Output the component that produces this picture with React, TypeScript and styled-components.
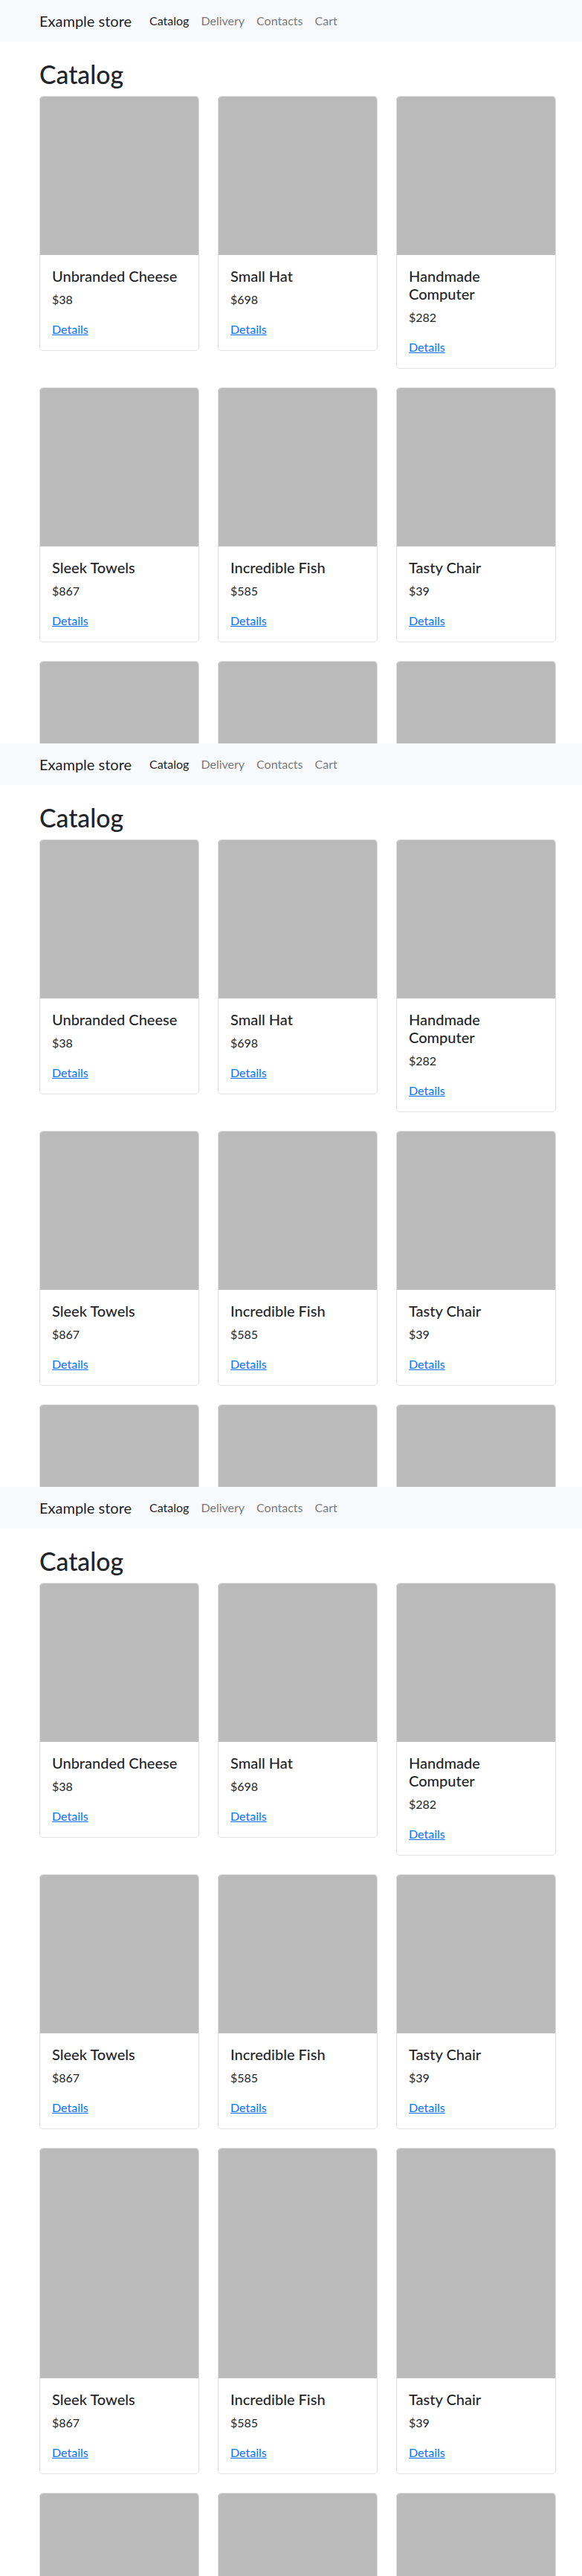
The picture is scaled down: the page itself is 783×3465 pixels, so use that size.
import React from "react";
import styled, { createGlobalStyle } from "styled-components";

const GlobalStyle = createGlobalStyle`
  html, body {
    margin: 0;
    padding: 0;
    background: #ffffff;
  }
  body {
    font-family: Lato, "Open Sans", "Liberation Sans", sans-serif;
    font-size: 16px;
    line-height: 1.5;
    color: #212529;
  }
  * { box-sizing: border-box; }
`;

const Screen = styled.section<{ $h: number }>`
  height: ${(p) => p.$h}px;
  overflow: hidden;
  background: #ffffff;
`;

const Navbar = styled.nav`
  height: 56px;
  background: #f8f9fa;
  padding: 8px 0;
  display: flex;
  align-items: center;
`;

const NavInner = styled.div`
  margin-left: 53px;
  display: flex;
  align-items: center;
`;

const Brand = styled.a`
  font-size: 20px;
  line-height: 30px;
  padding: 5px 0;
  margin-right: 16px;
  color: rgba(0, 0, 0, 0.9);
  text-decoration: none;
  white-space: nowrap;
`;

const NavList = styled.ul`
  list-style: none;
  display: flex;
  margin: 0;
  padding: 0;
`;

const NavLink = styled.a<{ $active?: boolean }>`
  display: block;
  padding: 8px 8px;
  font-size: 16px;
  line-height: 24px;
  text-decoration: none;
  color: ${(p) => (p.$active ? "rgba(0,0,0,0.9)" : "rgba(0,0,0,0.55)")};
`;

const Main = styled.main`
  margin-left: 53px;
  width: 695px;
`;

const Heading = styled.h1`
  margin: 24px 0 8px;
  font-size: 33.75px;
  line-height: 41px;
  font-weight: 500;
  color: #212529;
`;

const Grid = styled.div`
  display: grid;
  grid-template-columns: repeat(3, 215px);
  column-gap: 25px;
  row-gap: 25px;
  align-items: start;
`;

const Card = styled.div`
  display: flex;
  flex-direction: column;
  border: 1px solid rgba(0, 0, 0, 0.125);
  border-radius: 5px;
  background: #ffffff;
  overflow: hidden;
`;

const CardImage = styled.div<{ $h: number }>`
  height: ${(p) => p.$h}px;
  background: #bababa;
`;

const CardBody = styled.div`
  padding: 16px;
`;

const Title = styled.h5`
  margin: 0 0 8px;
  font-size: 20px;
  line-height: 24px;
  font-weight: 500;
  color: #212529;
`;

const Price = styled.p`
  margin: 0 0 16px;
  font-size: 16px;
  line-height: 24px;
`;

const Details = styled.a`
  font-size: 16px;
  line-height: 24px;
  color: #0d6efd;
  text-decoration: underline;
`;

type Product = { name: string; price: number };

const rowA: Product[] = [
  { name: "Unbranded Cheese", price: 38 },
  { name: "Small Hat", price: 698 },
  { name: "Handmade Computer", price: 282 },
];
const rowB: Product[] = [
  { name: "Sleek Towels", price: 867 },
  { name: "Incredible Fish", price: 585 },
  { name: "Tasty Chair", price: 39 },
];

const ProductCard = ({ p, img }: { p: Product; img: number }) => (
  <Card>
    <CardImage $h={img} />
    <CardBody>
      <Title>{p.name}</Title>
      <Price>${p.price}</Price>
      <Details href="#">Details</Details>
    </CardBody>
  </Card>
);

/* A card that lies below the fold of the screen: only its picture shows. */
const PeekCard = () => (
  <Card>
    <CardImage $h={213} />
  </Card>
);

const Page = ({ height, tallRow }: { height: number; tallRow?: number }) => (
  <Screen $h={height}>
    <Navbar>
      <NavInner>
        <Brand href="#">Example store</Brand>
        <NavList>
          <li><NavLink href="#" $active>Catalog</NavLink></li>
          <li><NavLink href="#">Delivery</NavLink></li>
          <li><NavLink href="#">Contacts</NavLink></li>
          <li><NavLink href="#">Cart</NavLink></li>
        </NavList>
      </NavInner>
    </Navbar>
    <Main>
      <Heading>Catalog</Heading>
      <Grid>
        {rowA.map((p, i) => <ProductCard key={"a" + i} p={p} img={213} />)}
        {rowB.map((p, i) => <ProductCard key={"b" + i} p={p} img={213} />)}
        {tallRow !== undefined &&
          rowB.map((p, i) => <ProductCard key={"c" + i} p={p} img={tallRow} />)}
        {[0, 1, 2].map((i) => <PeekCard key={"d" + i} />)}
      </Grid>
    </Main>
  </Screen>
);

export default function App() {
  return (
    <>
      <GlobalStyle />
      <Page height={1000} />
      <Page height={1000} />
      <Page height={1465} tallRow={309} />
    </>
  );
}
